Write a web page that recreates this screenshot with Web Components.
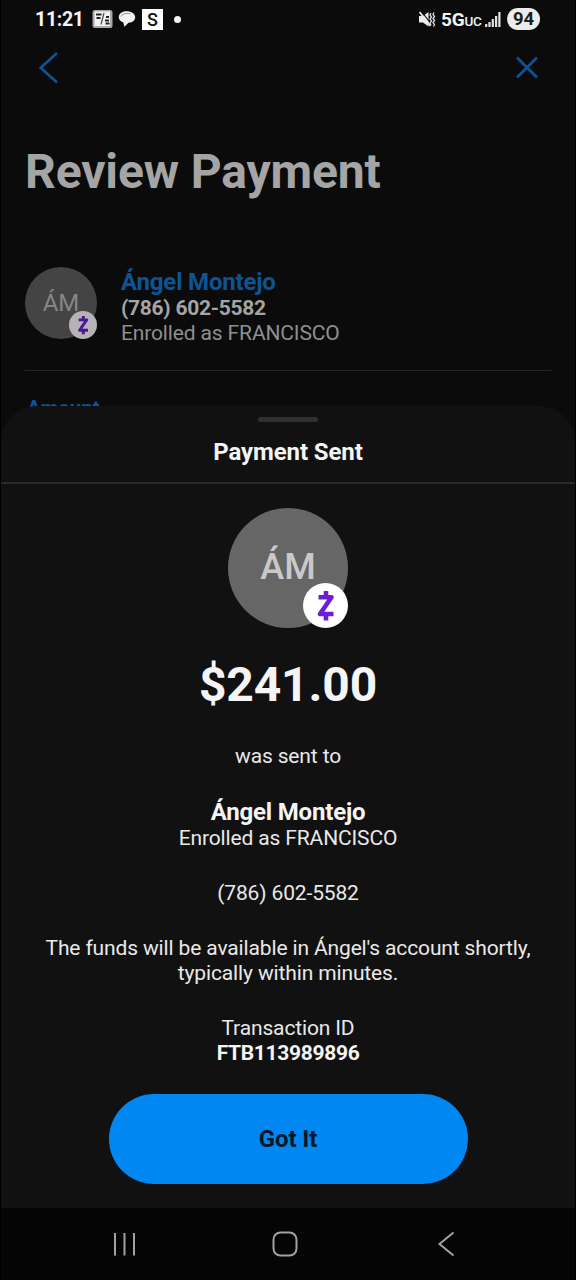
<!DOCTYPE html>
<html lang="en">
<head>
<meta charset="utf-8">
<meta name="viewport" content="width=device-width, initial-scale=1">
<title>Payment Sent</title>
<style>
  html, body { margin: 0; background: #000; }
  body { width: 576px; height: 1280px; overflow: hidden; font-family: Roboto, sans-serif; }
</style>
</head>
<body>
<pay-screen>
  <status-bar slot="status" time="11:21" network="5G" network-suffix="UC" battery="94"></status-bar>
  <review-page slot="page" heading="Review Payment" field="Amount">
    <contact-row initials="ÁM" name="Ángel Montejo" phone="(786) 602-5582" enrolled="Enrolled as FRANCISCO"></contact-row>
  </review-page>
  <bottom-sheet slot="sheet" heading="Payment Sent">
    <payment-receipt>
      <user-avatar slot="avatar" size="large">ÁM</user-avatar>
      <span slot="amount">$241.00</span>
      <span slot="sent">was sent to</span>
      <span slot="name">Ángel Montejo</span>
      <span slot="enrolled">Enrolled as FRANCISCO</span>
      <span slot="phone">(786) 602-5582</span>
      <span slot="note">The funds will be available in Ángel's account shortly,<br>typically within minutes.</span>
      <span slot="id-label">Transaction ID</span>
      <span slot="id">FTB113989896</span>
    </payment-receipt>
    <pill-button slot="action">Got It</pill-button>
  </bottom-sheet>
  <nav-bar slot="nav"></nav-bar>
</pay-screen>

<script>
/**
 * PayScreen
 *  - Element: pay-screen
 *  - Description: Phone screen, page below and sheet above it
 */
class PayScreen extends HTMLElement {

  constructor() {
    super();
    this.attachShadow({mode: 'open'}).innerHTML = `
      <style>
        :host { display: flex; flex-direction: column; position: relative; box-sizing: border-box; width: 576px; height: 1280px; padding: 0 1px; background: #000; }
        .page { flex: 1; min-height: 0; overflow: hidden; background: #0b0b0b; }
        .sheet { position: absolute; left: 1px; right: 1px; top: 406px; bottom: 72px; }
      </style>
      <div class="page"><slot name="status"></slot><slot name="page"></slot></div>
      <div class="sheet"><slot name="sheet"></slot></div>
      <slot name="nav"></slot>
    `;
  }

}

/**
 * StatusBar
 *  - Element: status-bar
 */
class StatusBar extends HTMLElement {

  connectedCallback() {
    this.attachShadow({mode: 'open'}).innerHTML = `
      <style>
        :host { display: flex; justify-content: space-between; align-items: center; height: 38px; padding: 0 35px 0 34px; color: #f4f4f4; }
        div { display: flex; align-items: center; }
        svg { display: block; }
        .time { width: 57px; font-size: 19.5px; font-weight: 700; letter-spacing: -0.3px; }
        .net { width: 42px; font-size: 19px; font-weight: 700; letter-spacing: -0.2px; margin-right: 2px; white-space: nowrap; }
        .net small { font-size: 13.5px; font-weight: 500; }
        .battery { box-sizing: border-box; width: 33px; height: 22px; line-height: 23px; border-radius: 11px; background: #ececec; color: #1b1b1b; font-size: 18.5px; font-weight: 700; text-align: center; }
        .app { width: 21px; height: 21px; line-height: 22px; background: #fff; color: #111; font-size: 18px; font-weight: 500; text-align: center; margin-left: 6px; }
        .dot { width: 7px; height: 7px; border-radius: 50%; background: #f4f4f4; margin-left: 11px; }
      </style>
      <div>
        <span class="time">${this.getAttribute('time')}</span>
        <svg width="21" height="20" viewBox="0 0 21 20">
          <rect x="0.500" y="1" width="20" height="18" rx="2.500" fill="#a8a8a8"/>
          <rect x="2.500" y="2.500" width="15.500" height="14.500" fill="#f2f2f2"/>
          <path d="M4 5.500h5.500M4.500 9h4M14 8h3M13 11.500h4M13.500 14.500h4" stroke="#222" stroke-width="2.200" fill="none"/>
          <path d="M12 4 9 15.500" stroke="#444" stroke-width="1.200"/>
        </svg>
        <svg width="18" height="18" viewBox="0 0 18 18" style="margin-left:5px">
          <path d="M8.500 1.200C4 1.200.800 3.700.800 7.100c0 2.500 1.600 4.400 4.400 5.200L6.500 16.800l4-4c4.200-.300 6.700-2.500 6.700-5.500C17.200 3.500 13.500 1.200 8.500 1.200Z" fill="#f2f2f2"/>
          <path d="M3 6.500C4 4 7.500 3 12 3.600" stroke="#888" fill="none"/>
        </svg>
        <span class="app">S</span>
        <span class="dot"></span>
      </div>
      <div>
        <svg width="17" height="18" viewBox="0 0 17 18" style="margin-right:5px">
          <path d="M0 6h4L9.500 2v14.500L4 12.500H0Z" fill="#ededed"/>
          <path d="M2 1 12 13.500" stroke="#0b0b0b" stroke-width="1.200"/>
          <path d="M.5 2 11.500 16" stroke="#ededed" stroke-width="1.800"/>
          <path d="M12 3l-1 2 1.500 2-1.500 2 1.500 2-1.500 2 1 2M15 2.500l-1 2 1.500 2-1.500 2 1.500 2-1.500 2 1.500 2-1 2" stroke="#dedede" stroke-width="1.300" fill="none"/>
        </svg>
        <span class="net">${this.getAttribute('network')}<small>${this.getAttribute('network-suffix')}</small></span>
        <svg width="16" height="17" viewBox="0 0 16 17" style="margin-right:6px">
          <path d="M1.200 13v3M4.500 11v5M7.800 8v8M11.100 5v11M14.400 1v15" stroke="#e4e4e4" stroke-width="2.200"/>
        </svg>
        <span class="battery">${this.getAttribute('battery')}</span>
      </div>
    `;
  }

}

/**
 * ReviewPage
 *  - Element: review-page
 *  - Description: Dimmed page under the sheet
 */
class ReviewPage extends HTMLElement {

  connectedCallback() {
    this.attachShadow({mode: 'open'}).innerHTML = `
      <style>
        :host { display: block; padding: 0 24px; }
        nav { display: flex; justify-content: space-between; align-items: center; height: 60px; padding: 0 12px 0 13px; }
        svg { display: block; fill: none; stroke: #0d5495; stroke-width: 2.700; }
        h1 { margin: 46px 0 0; height: 56px; line-height: 56px; font-size: 48px; font-weight: 700; letter-spacing: -0.12px; color: #a5a5a5; white-space: nowrap; }
        .contact { margin-top: 67px; height: 104px; box-sizing: border-box; border-bottom: 1.500px solid #232323; }
        .field { margin: 25px 0 0 2px; font-size: 20.500px; line-height: 24px; font-weight: 700; color: #0d5495; }
      </style>
      <nav>
        <svg width="22" height="34" viewBox="0 0 22 34"><path d="M19 2 2.700 16.700 19 31.500"/></svg>
        <svg width="24" height="24" viewBox="0 0 24 24"><path d="M2 1.500 22 21.500M22 1.500 2 21.500"/></svg>
      </nav>
      <h1>${this.getAttribute('heading')}</h1>
      <div class="contact"><slot></slot></div>
      <div class="field">${this.getAttribute('field')}</div>
    `;
  }

}

/**
 * ContactRow
 *  - Element: contact-row
 */
class ContactRow extends HTMLElement {

  connectedCallback() {
    this.attachShadow({mode: 'open'}).innerHTML = `
      <style>
        :host { display: flex; gap: 24px; white-space: nowrap; }
        .name { margin-top: 1px; font-size: 24px; line-height: 28px; font-weight: 700; letter-spacing: -0.18px; color: #0d5495; }
        .phone { font-size: 21px; line-height: 25px; font-weight: 700; letter-spacing: -0.28px; color: #a5a5a5; }
        .enrolled { font-size: 21px; line-height: 25px; letter-spacing: -0.14px; color: #8f8f8f; }
      </style>
      <user-avatar size="small">${this.getAttribute('initials')}</user-avatar>
      <div>
        <div class="name">${this.getAttribute('name')}</div>
        <div class="phone">${this.getAttribute('phone')}</div>
        <div class="enrolled">${this.getAttribute('enrolled')}</div>
      </div>
    `;
  }

}

/**
 * UserAvatar
 *  - Element: user-avatar
 *  - Description: Initials in a circle with the Zelle badge
 */
class UserAvatar extends HTMLElement {

  constructor() {
    super();
    this.attachShadow({mode: 'open'}).innerHTML = `
      <style>
        :host { display: grid; place-items: center; position: relative; flex: none; border-radius: 50%; letter-spacing: 0; }
        :host([size=large]) { width: 120px; height: 120px; background: #666; color: #c9c9c9; font-size: 36px; font-weight: 500; --badge: 45px; --disc: #fff; --mark: #6d1ed4; }
        :host([size=small]) { width: 72px; height: 72px; background: #444; color: #868686; font-size: 24px; --badge: 28px; --disc: #b5b2b8; --mark: #4a1693; }
        svg { position: absolute; right: 0; bottom: 0; width: var(--badge); height: var(--badge); }
        circle { fill: var(--disc); }
        path { fill: none; stroke: var(--mark); }
      </style>
      <span><slot></slot></span>
      <svg viewBox="0 0 45 45">
        <circle cx="22.500" cy="22.500" r="22.500"/>
        <path d="M15.500 14.200H28.500L17 31H30.500M23 8V14M23 31V37.500" stroke-width="4.600" stroke-linejoin="round"/>
      </svg>
    `;
  }

}

/**
 * BottomSheet
 *  - Element: bottom-sheet
 */
class BottomSheet extends HTMLElement {

  connectedCallback() {
    this.attachShadow({mode: 'open'}).innerHTML = `
      <style>
        :host { display: flex; flex-direction: column; height: 100%; border-radius: 36px 36px 0 0; background: #111; overflow: hidden; }
        .handle { align-self: center; width: 60px; height: 5px; margin-top: 11px; border-radius: 2.500px; background: #303030; }
        header { height: 60px; line-height: 60px; box-sizing: content-box; border-bottom: 2px solid #2b2b2b; text-align: center; font-size: 24px; font-weight: 700; letter-spacing: -0.1px; color: #f5f5f5; }
      </style>
      <div class="handle"></div>
      <header>${this.getAttribute('heading')}</header>
      <slot></slot>
      <slot name="action"></slot>
    `;
  }

}

/**
 * PaymentReceipt
 *  - Element: payment-receipt
 */
class PaymentReceipt extends HTMLElement {

  constructor() {
    super();
    this.attachShadow({mode: 'open'}).innerHTML = `
      <style>
        :host { display: flex; flex-direction: column; align-items: center; padding-top: 23.500px; text-align: center; white-space: nowrap; font-size: 21px; line-height: 25px; letter-spacing: -0.14px; color: #e9e9e9; }
        .amount { margin-top: 29.500px; font-size: 48px; line-height: 56px; font-weight: 700; color: #f5f5f5; }
        .sent { margin-top: 31px; }
        .name { margin-top: 29px; font-size: 24px; line-height: 28px; font-weight: 700; letter-spacing: -0.18px; color: #f5f5f5; }
        .phone, .note, .id-label { margin-top: 30px; }
        .id { font-weight: 700; letter-spacing: -0.32px; color: #f5f5f5; }
      </style>
      <slot name="avatar"></slot>
      <div class="amount"><slot name="amount"></slot></div>
      <div class="sent"><slot name="sent"></slot></div>
      <div class="name"><slot name="name"></slot></div>
      <div class="enrolled"><slot name="enrolled"></slot></div>
      <div class="phone"><slot name="phone"></slot></div>
      <div class="note"><slot name="note"></slot></div>
      <div class="id-label"><slot name="id-label"></slot></div>
      <div class="id"><slot name="id"></slot></div>
    `;
  }

}

/**
 * PillButton
 *  - Element: pill-button
 */
class PillButton extends HTMLElement {

  constructor() {
    super();
    this.attachShadow({mode: 'open'}).innerHTML = `
      <style>
        :host { display: block; align-self: center; margin-top: 28px; }
        button { display: block; width: 359px; height: 90px; padding: 0; border: 0; border-radius: 45px; background: #0087f2; color: #07182a; font: 700 24px Roboto, sans-serif; letter-spacing: -0.1px; }
      </style>
      <button type="button"><slot></slot></button>
    `;
  }

}

/**
 * NavBar
 *  - Element: nav-bar
 *  - Description: System navigation: recents, home, back
 */
class NavBar extends HTMLElement {

  constructor() {
    super();
    this.attachShadow({mode: 'open'}).innerHTML = `
      <style>
        :host { display: flex; align-items: center; box-sizing: border-box; height: 72px; padding: 0 0 1px 111px; background: #050505; }
        svg { display: block; fill: none; stroke: #a2a2a2; stroke-width: 2; }
        .home { margin-left: 134px; }
        .back { margin-left: 139px; }
      </style>
      <svg width="26" height="26" viewBox="0 0 26 26"><path d="M3 2V24.500M12.500 2V24.500M22 2V24.500"/></svg>
      <svg class="home" width="26" height="26" viewBox="0 0 26 26"><rect x="1.500" y="1.500" width="23" height="23" rx="7"/></svg>
      <svg class="back" width="18" height="26" viewBox="0 0 18 26"><path d="M16.500 1.500 2.500 13 16.500 24.500"/></svg>
    `;
  }

}

customElements.define('status-bar', StatusBar);
customElements.define('user-avatar', UserAvatar);
customElements.define('contact-row', ContactRow);
customElements.define('review-page', ReviewPage);
customElements.define('payment-receipt', PaymentReceipt);
customElements.define('pill-button', PillButton);
customElements.define('bottom-sheet', BottomSheet);
customElements.define('nav-bar', NavBar);
customElements.define('pay-screen', PayScreen);
</script>
</body>
</html>
